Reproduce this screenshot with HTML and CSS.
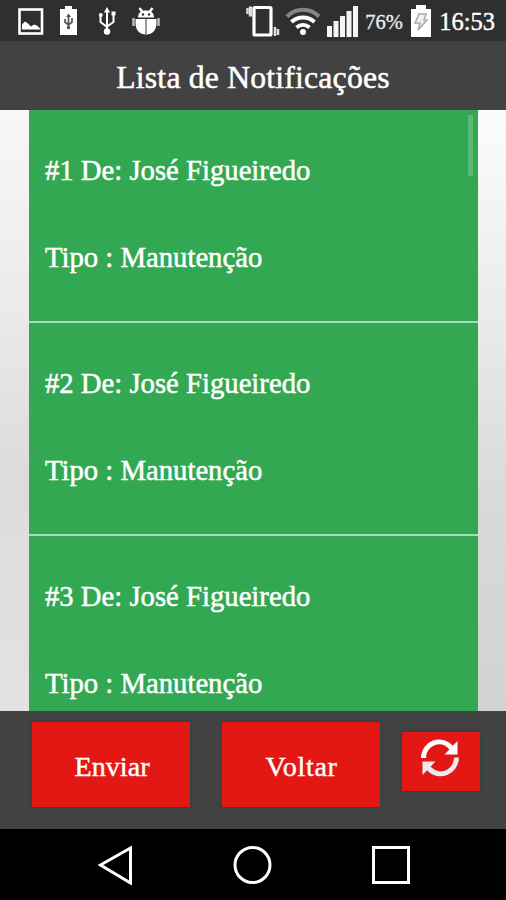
FILE: index.html
```html
<!DOCTYPE html>
<html lang="pt">
<head>
  <meta charset="UTF-8">
  <meta name="viewport" content="width=device-width, initial-scale=1.0">
  <title>Lista de Notificações</title>
  <link rel="stylesheet" href="styles.css">
</head>
<body>
  <div class="screen">
    <div class="status-bar">
      <div class="status-left">
        <svg width="26" height="27" viewBox="0 0 26 27">
          <rect x="1.500" y="1.500" width="22.500" height="24" fill="none" stroke="#fff" stroke-width="2.600"/>
          <path d="M4 21.500v-5l3-3 3 2 3 3 3-2 3 1 3 3v1z" fill="#fff"/>
        </svg>
        <svg class="icon-battery-usb" width="20" height="30" viewBox="0 0 20 30">
          <path d="M1 3h5V0h7v3h5v26H1z" fill="#fff"/>
          <path d="M9.500 9v14M6 13v3l3.500 3 3.500-3v-4" fill="none" stroke="#555" stroke-width="1.700"/>
          <circle cx="9.500" cy="21.500" r="1.700" fill="#555"/>
          <path d="M7 11l2.500-3.500 2.500 3.500z" fill="#555"/>
        </svg>
        <svg class="icon-usb" width="18" height="28" viewBox="0 0 18 28">
          <path d="M9 4v20M2.500 9v6l6.500 5M15.500 8v7L9 19.500" fill="none" stroke="#fff" stroke-width="2"/>
          <path d="M6 5.500L9 0l3 5.500z" fill="#fff"/>
          <circle cx="9" cy="24.500" r="3.200" fill="#fff"/>
          <circle cx="2.800" cy="8" r="2" fill="#fff"/>
          <rect x="13.500" y="4.500" width="4" height="4" fill="#fff"/>
        </svg>
        <svg class="icon-bug" width="28" height="28" viewBox="0 0 28 28">
          <path d="M6 10.500C6 6 9 3.500 14 3.500s8 2.500 8 7z" fill="#fff"/>
          <path d="M7.500 1l3 4M20.500 1l-3 4" stroke="#fff" stroke-width="2.500"/>
          <circle cx="11" cy="7.500" r="1.200" fill="#2f2f2f"/>
          <circle cx="17" cy="7.500" r="1.200" fill="#2f2f2f"/>
          <path d="M3.500 12h21v4c0 7-4 11.500-10.500 11.500S3.500 23 3.500 16z" fill="#fff"/>
          <path d="M14 12v15" stroke="#777" stroke-width="1.500"/>
          <path d="M1.500 11v8M26.500 11v8" stroke="#bbb" stroke-width="2.500"/>
        </svg>
      </div>
      <div class="status-right">
        <svg width="34" height="33" viewBox="0 0 34 33">
          <rect x="8" y="2.500" width="17" height="27.500" rx="1" fill="none" stroke="#fff" stroke-width="3.200"/>
          <path d="M1.500 3v6M29 22v9M32 24v6" stroke="#ddd" stroke-width="2.500"/>
          <path d="M4.500 1.500v10" stroke="#ddd" stroke-width="3.500"/>
        </svg>
        <svg class="icon-wifi" width="36" height="28" viewBox="0 0 36 28">
          <path d="M2 9.500C11 .5 25 .5 34 9.500" fill="none" stroke="#858585" stroke-width="4"/>
          <path d="M6.500 15c6.500-6 16.500-6 23 0M11.500 20.500c4-3.500 9-3.500 13 0" fill="none" stroke="#fff" stroke-width="4"/>
          <circle cx="18" cy="25" r="3" fill="#fff"/>
        </svg>
        <svg class="icon-signal" width="32" height="31" viewBox="0 0 32 31">
          <path d="M0 20h5v11H0zM6.500 15h5v16h-5zM13 10h5v21h-5zM19.500 5h5v26h-5zM26 0h5v31h-5z" fill="#f4f4f4"/>
        </svg>
        <span class="battery-level">76%</span>
        <svg class="icon-battery" width="21" height="32" viewBox="0 0 21 32">
          <path d="M0 4h5V0h10v4h5v28H0z" fill="#fff"/>
          <path d="M8 9h7l-2 6h3L7 25l2-7H4z" fill="#eee" stroke="#aaa" stroke-width="1.500"/>
        </svg>
        <span class="clock">16:53</span>
      </div>
    </div>

    <header class="title-bar">
      <h1>Lista de Notificações</h1>
    </header>

    <main class="content">
      <div class="scrollbar"></div>
      <ul class="notification-list">
        <li class="notification">
          <p>#1 De: José Figueiredo</p>
          <p>Tipo : Manutenção</p>
        </li>
        <li class="notification">
          <p>#2 De: José Figueiredo</p>
          <p>Tipo : Manutenção</p>
        </li>
        <li class="notification">
          <p>#3 De: José Figueiredo</p>
          <p>Tipo : Manutenção</p>
        </li>
      </ul>
    </main>

    <footer class="actions">
      <button class="btn">Enviar</button>
      <button class="btn btn-back">Voltar</button>
      <button class="btn btn-refresh" aria-label="Atualizar">
        <svg width="40" height="38" viewBox="0 0 40 38">
          <path d="M3.500 19C4 4 21-3 31.500 9" fill="none" stroke="#fff" stroke-width="5"/>
          <path d="M37.500 2v13.500H24.500z" fill="#fff"/>
          <path d="M36.500 18.500C36 33 19 41 8.500 29" fill="none" stroke="#ececec" stroke-width="5"/>
          <path d="M2.500 36V22.500H15.500z" fill="#ececec"/>
        </svg>
      </button>
    </footer>

    <nav class="nav-bar">
      <svg width="36" height="40" viewBox="0 0 36 40">
        <path d="M3.500 20L33.500 3v35z" fill="none" stroke="#fff" stroke-width="3"/>
      </svg>
      <svg width="40" height="40" viewBox="0 0 40 40">
        <circle cx="20.500" cy="20" r="17.500" fill="none" stroke="#fff" stroke-width="3"/>
      </svg>
      <svg width="40" height="40" viewBox="0 0 40 40">
        <rect x="2.500" y="2.500" width="35" height="35" fill="none" stroke="#fff" stroke-width="3"/>
      </svg>
    </nav>
  </div>
</body>
</html>
```
FILE: styles.css
```css
* {
  box-sizing: border-box;
}

body {
  margin: 0;
  font-family: "Liberation Serif", "Times New Roman", serif;
  color: #fff;
}

svg {
  display: block;
  flex: none;
}

.screen {
  display: flex;
  flex-direction: column;
  width: 506px;
  height: 900px;
  overflow: hidden;
}

/* status bar */
.status-bar {
  display: flex;
  justify-content: space-between;
  height: 41px;
  padding: 0 11px 0 18px;
  background-color: #2f2f2f;
}

.status-left,
.status-right {
  display: flex;
  align-items: center;
  height: 42px;
}

.icon-battery-usb {
  margin-left: 15px;
}

.icon-usb {
  margin-left: 19px;
}

.icon-bug {
  margin-left: 16px;
}

.icon-wifi {
  margin-left: 5px;
}

.icon-signal {
  margin-left: 6px;
}

.battery-level {
  width: 38px;
  margin-left: 6px;
  padding-top: 2px;
  font-size: 20.5px;
  color: #ececec;
  -webkit-text-stroke: 0.3px #ececec;
}

.icon-battery {
  margin-left: 8px;
}

.clock {
  margin-left: 7px;
  padding-top: 1px;
  font-size: 24.5px;
  -webkit-text-stroke: 0.4px #fff;
}

/* title */
.title-bar {
  display: flex;
  align-items: center;
  justify-content: center;
  height: 69px;
  padding-top: 4px;
  background-color: #424242;
}

.title-bar h1 {
  margin: 0;
  font-size: 31.7px;
  font-weight: normal;
  line-height: 36px;
  letter-spacing: 0.2px;
  -webkit-text-stroke: 0.5px #fff;
}

/* list */
.content {
  position: relative;
  height: 601px;
  padding: 0 28px 0 29px;
  overflow: hidden;
  background-image:
    linear-gradient(#f7f7f7 0, #ebebeb 32%, #dcdcdc 60%, #e2e2e2 100%),
    linear-gradient(#fcfcfc 0, #eaeaea 35%, #d9d9d9 65%, #d2d2d2 100%);
  background-size: 50% 100%;
  background-position: left top, right top;
  background-repeat: no-repeat;
}

.notification-list {
  margin: 0;
  padding: 0;
  list-style: none;
}

.notification {
  height: 213px;
  padding: 43px 16px 0;
  background-color: #33a852;
  border-bottom: 2px solid #a5dcb3;
}

.notification p {
  margin: 0 0 53px;
  font-size: 28.7px;
  line-height: 34px;
  white-space: nowrap;
  -webkit-text-stroke: 0.5px #fff;
}

.scrollbar {
  position: absolute;
  top: 5px;
  right: 33px;
  width: 5px;
  height: 61px;
  background-color: #5aba74;
}

/* buttons */
.actions {
  display: flex;
  align-items: flex-start;
  height: 118px;
  padding: 11px 25px 0 32px;
  background-color: #424242;
}

.btn {
  width: 158px;
  height: 85px;
  margin: 0 32px 0 0;
  padding: 5px 0 0 2px;
  border: none;
  background-color: #e31815;
  box-shadow: 0 0 1px 1px #2f4545;
  color: #fff;
  font-family: inherit;
  font-size: 28.2px;
  -webkit-text-stroke: 0.4px #fff;
}

.btn-back {
  margin-right: 22px;
  padding-left: 1px;
  letter-spacing: 0.6px;
}

.btn-refresh {
  display: flex;
  justify-content: center;
  width: 78px;
  height: 59px;
  margin: 10px 0 0;
  padding: 7px 2px 0 0;
}

/* android navigation */
.nav-bar {
  display: flex;
  align-items: center;
  justify-content: space-between;
  flex: 1;
  padding: 1px 95px 0 97px;
  background-color: #000;
}
```
